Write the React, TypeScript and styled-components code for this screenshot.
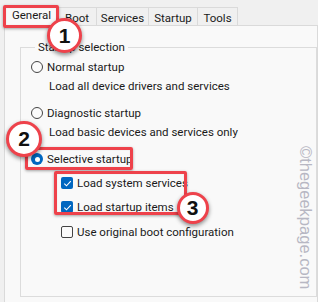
import React from "react";
import styled, { createGlobalStyle, css } from "styled-components";

const Global = createGlobalStyle`
  html, body { margin: 0; padding: 0; background: #f0f0f0; }
  body { font-family: Roboto, "Noto Sans", sans-serif; font-size: 11.5px; color: #1a1a1a; }
`;

const Page = styled.div`
  position: relative;
  width: 318px;
  height: 302px;
  overflow: hidden;
  padding: 7px 0 0 4px;
  box-sizing: border-box;
`;

const TabStrip = styled.div`
  display: flex;
  height: 18px;
  padding-left: 1px;
  position: relative;
  z-index: 1;
`;

const Tab = styled.div<{ $active?: boolean; $w: number }>`
  width: ${(p) => p.$w}px;
  box-sizing: border-box;
  display: flex;
  align-items: center;
  justify-content: center;
  border: 1px solid #dadada;
  border-left-width: 0;
  border-bottom: none;
  background: #f0f0f0;
  line-height: 16px;
  padding-top: 2px;
  ${(p) =>
    p.$active &&
    css`
      border-left-width: 1px;
      background: #f9f9f9;
      height: 21px;
      margin-top: -2px;
      padding-top: 0;
      padding-bottom: 2px;
    `}
`;

const Panel = styled.div`
  border: 1px solid #dadada;
  background: #f9f9f9;
  height: 280px;
  padding: 14px 0 0 15px;
  box-sizing: border-box;
`;

const Group = styled.fieldset`
  margin: 0;
  border: 1px solid #dcdcdc;
  padding: 3px 0 0 10px;
  height: 257px;
  box-sizing: border-box;
  display: flex;
  flex-direction: column;
`;

const Legend = styled.legend`
  padding: 0 3px;
  margin-left: 4px;
  line-height: 14px;
`;

const Row = styled.div<{ $mt: number; $indent?: number }>`
  display: flex;
  align-items: center;
  gap: 4px;
  height: 16px;
  line-height: 16px;
  margin-top: ${(p) => p.$mt}px;
  padding-left: ${(p) => p.$indent ?? 0}px;
  white-space: nowrap;
`;

const Radio = styled.span<{ $on?: boolean }>`
  width: 12px;
  height: 12px;
  border-radius: 50%;
  box-sizing: border-box;
  flex: none;
  ${(p) =>
    p.$on
      ? css`
          background: #0067c0;
          display: flex;
          align-items: center;
          justify-content: center;
          &::after {
            content: "";
            width: 5px;
            height: 5px;
            border-radius: 50%;
            background: #fff;
          }
        `
      : css`
          border: 1px solid #444;
          background: #fbfbfb;
        `}
`;

const Check = styled.span<{ $on?: boolean }>`
  width: 12px;
  height: 12px;
  border-radius: 2px;
  box-sizing: border-box;
  flex: none;
  display: flex;
  align-items: center;
  justify-content: center;
  ${(p) =>
    p.$on
      ? css`
          background: #0067c0;
        `
      : css`
          border: 1px solid #444;
          background: #fbfbfb;
        `}
`;

const Box = styled.div<{ $x: number; $y: number; $w: number; $h: number }>`
  position: absolute;
  left: ${(p) => p.$x}px;
  top: ${(p) => p.$y}px;
  width: ${(p) => p.$w}px;
  height: ${(p) => p.$h}px;
  border: 3px solid #ee424b;
  border-radius: 2px;
  box-sizing: border-box;
  box-shadow: 0 1px 3px rgba(0, 0, 0, 0.35), inset 0 0 1px rgba(0, 0, 0, 0.2);
  z-index: 5;
`;

const Badge = styled.div<{ $x: number; $y: number; $d: number }>`
  position: absolute;
  left: ${(p) => p.$x - p.$d / 2}px;
  top: ${(p) => p.$y - p.$d / 2}px;
  width: ${(p) => p.$d}px;
  height: ${(p) => p.$d}px;
  border-radius: 50%;
  border: 3px solid #ee424b;
  background: #fff;
  box-sizing: border-box;
  display: flex;
  align-items: center;
  justify-content: center;
  font-family: "Liberation Sans", Arial, sans-serif;
  font-weight: bold;
  font-size: 21px;
  color: #111;
  box-shadow: 0 2px 4px rgba(0, 0, 0, 0.45);
  z-index: 6;
`;

const Watermark = styled.div`
  position: absolute;
  left: 315px;
  top: 146px;
  transform-origin: 0 0;
  transform: rotate(90deg);
  font-family: "Liberation Sans", Arial, sans-serif;
  font-size: 16.5px;
  line-height: 18px;
  color: #b7b7c3;
  white-space: nowrap;
  z-index: 2;
`;

const CheckMark = () => (
  <svg width="9" height="9" viewBox="0 0 9 9">
    <path d="M1.3 4.6 L3.5 6.8 L7.8 2.2" fill="none" stroke="#fff" strokeWidth="1.1" />
  </svg>
);

export default function App() {
  return (
    <Page>
      <Global />
      <TabStrip>
        <Tab $active $w={53}>General</Tab>
        <Tab $w={39}>Boot</Tab>
        <Tab $w={52}>Services</Tab>
        <Tab $w={49}>Startup</Tab>
        <Tab $w={40}>Tools</Tab>
      </TabStrip>
      <Panel>
        <Group>
          <Legend>Startup selection</Legend>
          <Row $mt={2}>
            <Radio />
            Normal startup
          </Row>
          <Row $mt={3} $indent={18}>Load all device drivers and services</Row>
          <Row $mt={11}>
            <Radio />
            Diagnostic startup
          </Row>
          <Row $mt={3} $indent={18}>Load basic devices and services only</Row>
          <Row $mt={11}>
            <Radio $on />
            Selective startup
          </Row>
          <Row $mt={8} $indent={30}>
            <Check $on>
              <CheckMark />
            </Check>
            Load system services
          </Row>
          <Row $mt={8} $indent={30}>
            <Check $on>
              <CheckMark />
            </Check>
            Load startup items
          </Row>
          <Row $mt={9} $indent={30}>
            <Check />
            Use original boot configuration
          </Row>
        </Group>
      </Panel>
      <Box $x={3} $y={5} $w={56} $h={23} />
      <Box $x={25} $y={147} $w={108} $h={23} />
      <Box $x={54} $y={171} $w={133} $h={44} />
      <Badge $x={64.5} $y={35.5} $d={35}>1</Badge>
      <Badge $x={24} $y={139} $d={36}>2</Badge>
      <Badge $x={192.5} $y={207.5} $d={32}>3</Badge>
      <Watermark>©thegeekpage.com</Watermark>
    </Page>
  );
}
